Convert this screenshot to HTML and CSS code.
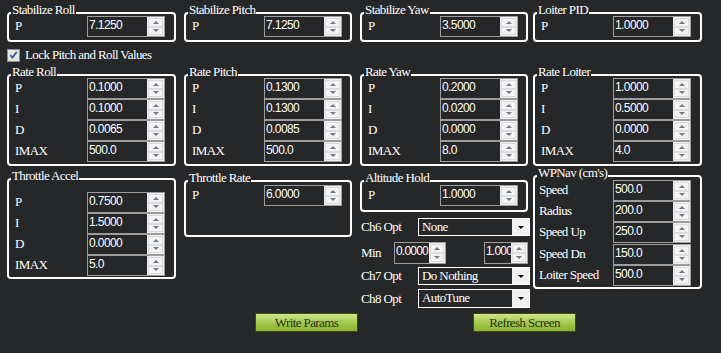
FILE: index.html
```html
<!DOCTYPE html>
<html>
<head>
<meta charset="utf-8">
<link rel="stylesheet" href="styles.css">
</head>
<body>
<div class="page">
  <div class="row row1">
    <div class="grp c1"><span class="ttl">Stabilize Roll</span>
      <div class="fld"><span class="lbl">P</span><div class="num"><span class="val">7.1250</span><span class="spin"><i class="up"></i><i class="dn"></i></span></div></div>
    </div>
    <div class="grp c2"><span class="ttl">Stabilize Pitch</span>
      <div class="fld"><span class="lbl">P</span><div class="num"><span class="val">7.1250</span><span class="spin"><i class="up"></i><i class="dn"></i></span></div></div>
    </div>
    <div class="grp c3"><span class="ttl">Stabilize Yaw</span>
      <div class="fld"><span class="lbl">P</span><div class="num"><span class="val">3.5000</span><span class="spin"><i class="up"></i><i class="dn"></i></span></div></div>
    </div>
    <div class="grp c4"><span class="ttl">Loiter PID</span>
      <div class="fld"><span class="lbl">P</span><div class="num"><span class="val">1.0000</span><span class="spin"><i class="up"></i><i class="dn"></i></span></div></div>
    </div>
  </div>

  <label class="chk"><span class="box"><svg width="12" height="12" viewBox="0 0 12 12"><path d="M2.5 6.2 L4.8 8.8 L9.6 2.6" fill="none" stroke="#3d5f8f" stroke-width="2"/></svg></span><span class="ctext">Lock Pitch and Roll Values</span></label>

  <div class="row row2">
    <div class="grp c1"><span class="ttl">Rate Roll</span>
      <div class="fld"><span class="lbl">P</span><div class="num"><span class="val">0.1000</span><span class="spin"><i class="up"></i><i class="dn"></i></span></div></div>
      <div class="fld"><span class="lbl">I</span><div class="num"><span class="val">0.1000</span><span class="spin"><i class="up"></i><i class="dn"></i></span></div></div>
      <div class="fld"><span class="lbl">D</span><div class="num"><span class="val">0.0065</span><span class="spin"><i class="up"></i><i class="dn"></i></span></div></div>
      <div class="fld"><span class="lbl">IMAX</span><div class="num"><span class="val">500.0</span><span class="spin"><i class="up"></i><i class="dn"></i></span></div></div>
    </div>
    <div class="grp c2"><span class="ttl">Rate Pitch</span>
      <div class="fld"><span class="lbl">P</span><div class="num"><span class="val">0.1300</span><span class="spin"><i class="up"></i><i class="dn"></i></span></div></div>
      <div class="fld"><span class="lbl">I</span><div class="num"><span class="val">0.1300</span><span class="spin"><i class="up"></i><i class="dn"></i></span></div></div>
      <div class="fld"><span class="lbl">D</span><div class="num"><span class="val">0.0085</span><span class="spin"><i class="up"></i><i class="dn"></i></span></div></div>
      <div class="fld"><span class="lbl">IMAX</span><div class="num"><span class="val">500.0</span><span class="spin"><i class="up"></i><i class="dn"></i></span></div></div>
    </div>
    <div class="grp c3"><span class="ttl">Rate Yaw</span>
      <div class="fld"><span class="lbl">P</span><div class="num"><span class="val">0.2000</span><span class="spin"><i class="up"></i><i class="dn"></i></span></div></div>
      <div class="fld"><span class="lbl">I</span><div class="num"><span class="val">0.0200</span><span class="spin"><i class="up"></i><i class="dn"></i></span></div></div>
      <div class="fld"><span class="lbl">D</span><div class="num"><span class="val">0.0000</span><span class="spin"><i class="up"></i><i class="dn"></i></span></div></div>
      <div class="fld"><span class="lbl">IMAX</span><div class="num"><span class="val">8.0</span><span class="spin"><i class="up"></i><i class="dn"></i></span></div></div>
    </div>
    <div class="grp c4"><span class="ttl">Rate Loiter</span>
      <div class="fld"><span class="lbl">P</span><div class="num"><span class="val">1.0000</span><span class="spin"><i class="up"></i><i class="dn"></i></span></div></div>
      <div class="fld"><span class="lbl">I</span><div class="num"><span class="val">0.5000</span><span class="spin"><i class="up"></i><i class="dn"></i></span></div></div>
      <div class="fld"><span class="lbl">D</span><div class="num"><span class="val">0.0000</span><span class="spin"><i class="up"></i><i class="dn"></i></span></div></div>
      <div class="fld"><span class="lbl">IMAX</span><div class="num"><span class="val">4.0</span><span class="spin"><i class="up"></i><i class="dn"></i></span></div></div>
    </div>
  </div>

  <div class="row row3">
    <div class="grp c1 thr-accel"><span class="ttl">Throttle Accel</span>
      <div class="fld"><span class="lbl">P</span><div class="num"><span class="val">0.7500</span><span class="spin"><i class="up"></i><i class="dn"></i></span></div></div>
      <div class="fld"><span class="lbl">I</span><div class="num"><span class="val">1.5000</span><span class="spin"><i class="up"></i><i class="dn"></i></span></div></div>
      <div class="fld"><span class="lbl">D</span><div class="num"><span class="val">0.0000</span><span class="spin"><i class="up"></i><i class="dn"></i></span></div></div>
      <div class="fld"><span class="lbl">IMAX</span><div class="num"><span class="val">5.0</span><span class="spin"><i class="up"></i><i class="dn"></i></span></div></div>
    </div>
    <div class="grp c2 thr-rate"><span class="ttl">Throttle Rate</span>
      <div class="fld"><span class="lbl">P</span><div class="num"><span class="val">6.0000</span><span class="spin"><i class="up"></i><i class="dn"></i></span></div></div>
    </div>
    <div class="stack c3">
      <div class="grp alt"><span class="ttl">Altitude Hold</span>
        <div class="fld"><span class="lbl">P</span><div class="num"><span class="val">1.0000</span><span class="spin"><i class="up"></i><i class="dn"></i></span></div></div>
      </div>
      <div class="opt ch6"><span class="olbl">Ch6 Opt</span><div class="sel"><span class="stxt">None</span><span class="sbtn"><i></i></span></div></div>
      <div class="opt minrow"><span class="olbl mlbl">Min</span>
        <div class="num small n1"><span class="val">0.0000</span><span class="spin"><i class="up"></i><i class="dn"></i></span></div>
        <div class="num small n2"><span class="val">1.000</span><span class="spin"><i class="up"></i><i class="dn"></i></span></div>
      </div>
      <div class="opt ch7"><span class="olbl">Ch7 Opt</span><div class="sel"><span class="stxt">Do Nothing</span><span class="sbtn"><i></i></span></div></div>
      <div class="opt ch8"><span class="olbl">Ch8 Opt</span><div class="sel tall"><span class="stxt">AutoTune</span><span class="sbtn"><i></i></span></div></div>
    </div>
    <div class="grp c4 wpnav"><span class="ttl">WPNav (cm's)</span>
      <div class="fld"><span class="lbl">Speed</span><div class="num"><span class="val">500.0</span><span class="spin"><i class="up"></i><i class="dn"></i></span></div></div>
      <div class="fld"><span class="lbl">Radius</span><div class="num"><span class="val">200.0</span><span class="spin"><i class="up"></i><i class="dn"></i></span></div></div>
      <div class="fld gapafter"><span class="lbl">Speed Up</span><div class="num"><span class="val">250.0</span><span class="spin"><i class="up"></i><i class="dn"></i></span></div></div>
      <div class="fld"><span class="lbl">Speed Dn</span><div class="num"><span class="val">150.0</span><span class="spin"><i class="up"></i><i class="dn"></i></span></div></div>
      <div class="fld"><span class="lbl">Loiter Speed</span><div class="num"><span class="val">500.0</span><span class="spin"><i class="up"></i><i class="dn"></i></span></div></div>
    </div>
  </div>

  <div class="btnrow">
    <button class="btn">Write Params</button>
    <button class="btn">Refresh Screen</button>
  </div>
</div>
</body>
</html>
```
FILE: styles.css
```css
* { box-sizing: border-box; }
html, body { margin: 0; padding: 0; }
body {
  background: #262729;
  width: 721px;
  height: 353px;
  overflow: hidden;
  font-family: "Liberation Serif", "DejaVu Serif", serif;
  font-size: 13px;
  letter-spacing: -0.6px;
  color: #ffffff;
}
.page { padding-top: 12px; }

.row { display: flex; align-items: flex-start; }

.grp {
  position: relative;
  border: 2px solid #ffffff;
  border-radius: 4px;
  padding: 2px 0 3px 0;
}
.c1 { margin-left: 7px; width: 169px; }
.c2 { margin-left: 8px; width: 168px; }
.c3 { margin-left: 8px; width: 168px; }
.c4 { margin-left: 5px; width: 169px; }

.ttl {
  position: absolute;
  left: 2px;
  top: -11px;
  padding: 0 1px;
  line-height: 14px;
  background: #262729;
  white-space: nowrap;
}

.fld { display: flex; height: 21px; align-items: stretch; }
.lbl {
  width: 78px;
  flex: none;
  padding: 2px 0 0 6px;
  line-height: 15px;
  white-space: nowrap;
}
.num {
  width: 78px;
  flex: none;
  display: flex;
  border: 1px solid #9d9d9d;
  background: #262729;
  overflow: hidden;
}
.val {
  flex: 1;
  min-width: 0;
  white-space: nowrap;
  font-family: "Liberation Sans", Arial, sans-serif;
  font-size: 12px;
  letter-spacing: -0.6px;
  line-height: 14px;
  padding: 1px 0 0 1px;
  color: #ffffff;
}
.spin {
  width: 17px;
  flex: none;
  display: flex;
  flex-direction: column;
  background: #f0f0f0;
  padding: 1px;
  position: relative;
  z-index: 1;
}
.spin i {
  flex: 1;
  display: flex;
  align-items: center;
  justify-content: center;
  background: #f3f3f3;
  border: 1px solid #dcdcdc;
}
.spin i::before {
  content: "";
  width: 0; height: 0;
  border-left: 3px solid transparent;
  border-right: 3px solid transparent;
}
.spin .up::before { border-bottom: 3px solid #6d7a8c; }
.spin .dn::before { border-top: 3px solid #6d7a8c; }

.row1 .grp { height: 30px; }

.chk {
  display: flex;
  align-items: center;
  margin: 6px 0 0 7px;
  height: 14px;
}
.chk .box {
  width: 13px; height: 13px;
  border: 1px solid #8f8f8f;
  background: #e6e6e6;
  display: flex;
  align-items: center;
  justify-content: center;
  margin-right: 5px;
}
.chk .box svg { display: block; }
.ctext { line-height: 14px; }

.row2 { margin-top: 12px; }
.row2 .grp { padding: 2px 0 0 0; height: 92px; }

.row3 { margin-top: 9px; }
.thr-accel { margin-top: 3px; padding-top: 12px; height: 101px; }
.thr-rate { margin-top: 5px; padding-top: 3px; height: 57px; }

.stack { display: flex; flex-direction: column; margin-top: 5px; }
.alt { padding-top: 3px; height: 32px; }

.opt { display: flex; align-items: center; }
.olbl { width: 58px; padding-left: 1px; flex: none; white-space: nowrap; }
.ch6 { margin-top: 6px; }
.minrow { margin-top: 6px; height: 22px; }
.ch7 { margin-top: 3px; }
.ch8 { margin-top: 4px; }
.mlbl { width: 34px; }

.sel {
  width: 112px;
  height: 18px;
  flex: none;
  display: flex;
  border: 1px solid #ffffff;
  background: #262729;
}
.sel.tall { height: 19px; }
.stxt { flex: 1; padding: 0 0 0 3px; line-height: 15px; white-space: nowrap; }
.sbtn {
  width: 17px;
  background: #f0f0f0;
  display: flex;
  align-items: center;
  justify-content: center;
}
.sbtn i {
  width: 0; height: 0;
  border-left: 3px solid transparent;
  border-right: 3px solid transparent;
  border-top: 3px solid #000000;
}

.num.small { height: 22px; }
.num.small .spin { width: 16px; }
.num.small .val { letter-spacing: -0.8px; }
.n1 { width: 52px; }
.n2 { width: 44px; margin-left: 38px; }

.wpnav { margin-top: 0; padding-top: 3px; height: 114px; }
.wpnav .lbl { padding-left: 4px; }
.gapafter { margin-bottom: 1px; }

.btnrow { display: flex; margin: 5px 0 0 255px; gap: 115px; }
.btn {
  width: 103px;
  height: 19px;
  padding: 0;
  border: 1px solid #3b4a18;
  background: linear-gradient(#cfe58a, #9ec544 60%, #8ab530);
  font-family: "Liberation Serif", "DejaVu Serif", serif;
  font-size: 13px;
  letter-spacing: -0.6px;
  color: #2a2f20;
  line-height: 16px;
}
```
